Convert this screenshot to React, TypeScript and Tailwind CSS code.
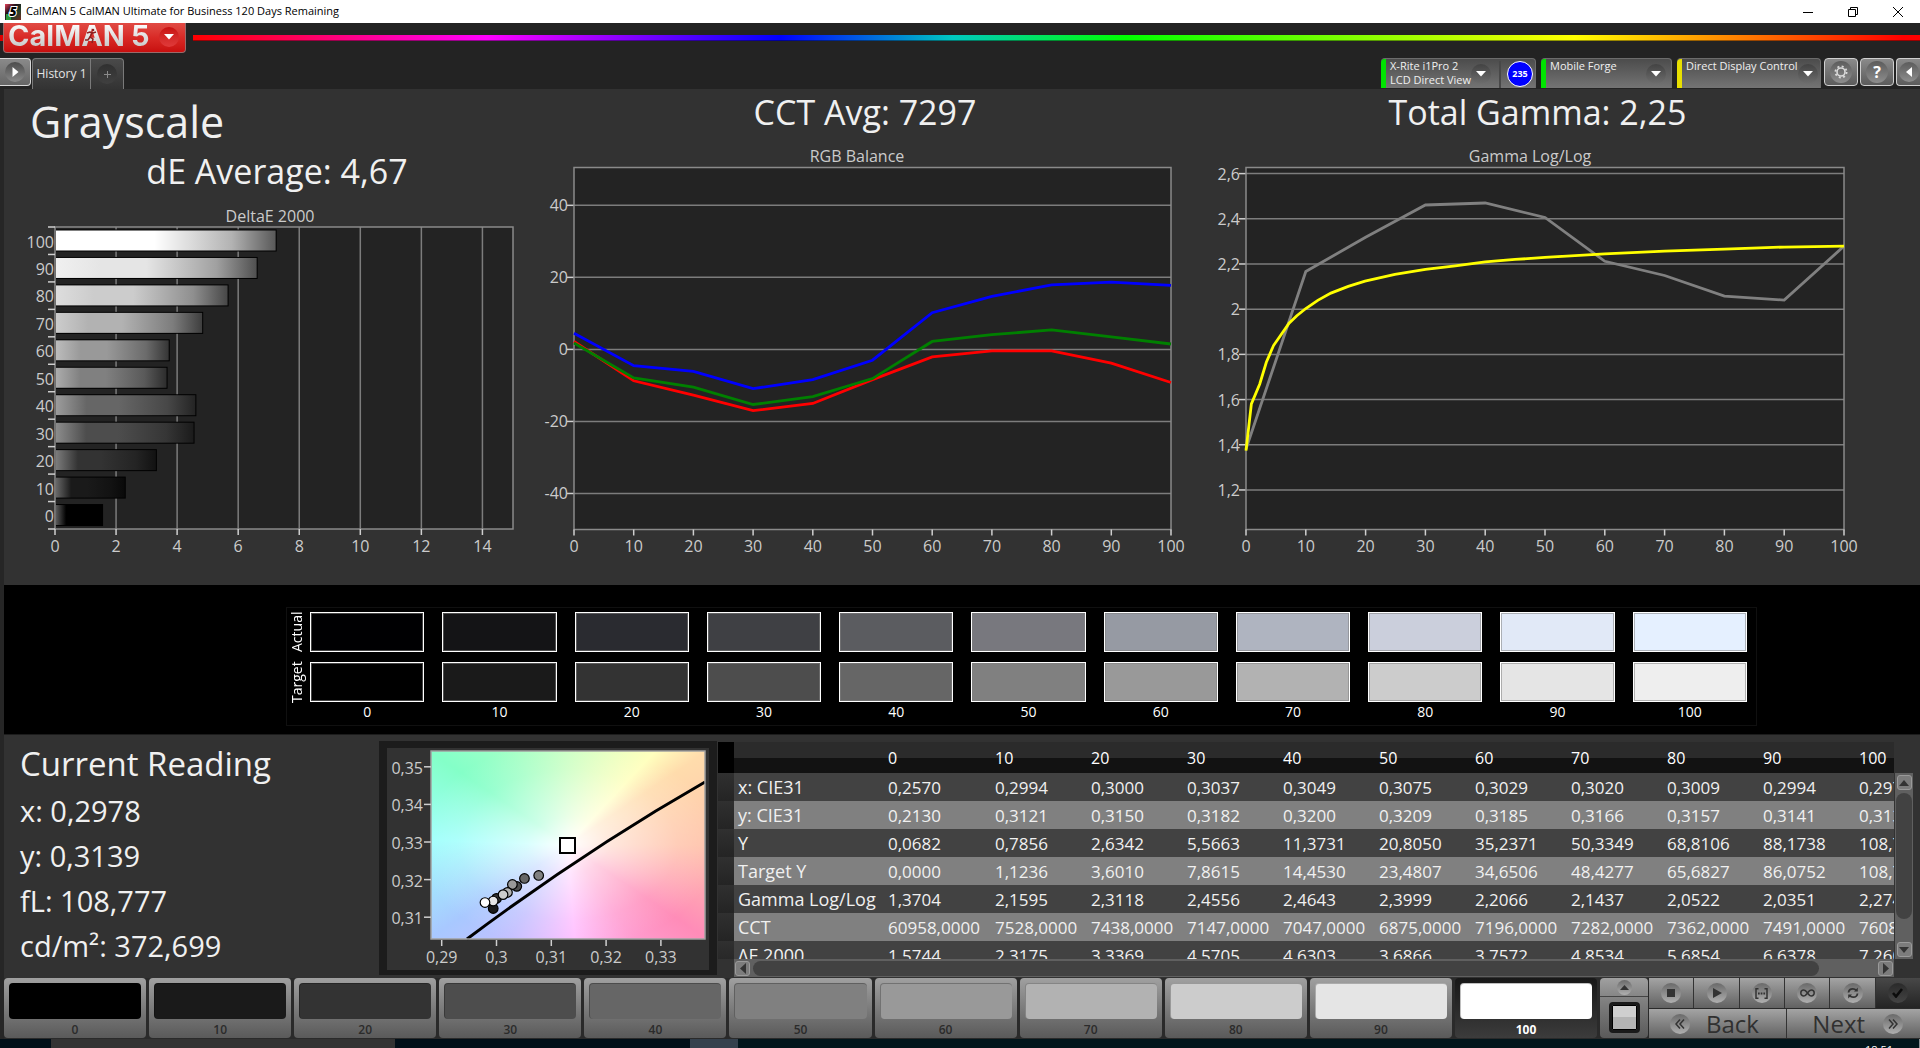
import React, { useState } from 'react';
import { clsx } from 'clsx';

const LEVELS = [0, 10, 20, 30, 40, 50, 60, 70, 80, 90, 100];

const TARGET_COLORS = ['#000000', '#1a1a1a', '#333333', '#4d4d4d', '#666666', '#808080', '#999999', '#b2b2b2', '#cccccc', '#e5e5e5', '#eeeeee'];
const ACTUAL_COLORS = ['#000002', '#141416', '#2a2b30', '#3f4044', '#5b5c60', '#78787e', '#969aa3', '#afb4c0', '#cbcfdc', '#e1e9f7', '#e5f0ff'];
const PATCH_COLORS = ['#000000', '#1a1a1a', '#333333', '#4d4d4d', '#666666', '#808080', '#999999', '#b2b2b2', '#cccccc', '#e5e5e5', '#ffffff'];

const DELTA_E = [1.5744, 2.3175, 3.3369, 4.5705, 4.6303, 3.6866, 3.7572, 4.8534, 5.6854, 6.6378, 7.26];
const BAR_HIGHLIGHTS = ['#5a5a5a', '#686868', '#7c7c7c', '#8c8c8c', '#9c9c9c', '#acacac', '#bcbcbc', '#cccccc', '#dddddd', '#f0f0f0', '#ffffff'];

const RGB_BALANCE = [
  { color: '#0000ff', values: [4.5, -4.5, -6.1, -10.9, -8.4, -3, 10.2, 14.7, 17.9, 18.7, 17.8] },
  { color: '#ff0000', values: [2.2, -8.7, -12.7, -17, -15, -8.4, -2.1, -0.4, -0.4, -3.8, -9.2] },
  { color: '#008000', values: [1.8, -7.9, -10.5, -15.3, -13.1, -8.1, 2.2, 4.1, 5.4, 3.5, 1.5] },
];

const GAMMA_MEASURED = [1.381, 2.167, 2.318, 2.461, 2.47, 2.406, 2.212, 2.149, 2.058, 2.04, 2.279];
const GAMMA_TARGET: [number, number][] = [
  [0, 1.374], [0.9, 1.581], [2.3, 1.669], [3.4, 1.765], [4.6, 1.839], [7.2, 1.938], [8.5, 1.971], [10, 2.003],
  [12, 2.039], [14.2, 2.071], [17.1, 2.101], [19.9, 2.124], [24.9, 2.154], [30, 2.176], [35, 2.192], [40, 2.209],
  [45, 2.22], [50, 2.229], [60, 2.245], [70, 2.257], [80, 2.266], [90, 2.275], [100, 2.279],
];

const TABLE_ROWS: { label: string; values: string[] }[] = [
  { label: 'x: CIE31', values: ['0,2570', '0,2994', '0,3000', '0,3037', '0,3049', '0,3075', '0,3029', '0,3020', '0,3009', '0,2994', '0,2978'] },
  { label: 'y: CIE31', values: ['0,2130', '0,3121', '0,3150', '0,3182', '0,3200', '0,3209', '0,3185', '0,3166', '0,3157', '0,3141', '0,3139'] },
  { label: 'Y', values: ['0,0682', '0,7856', '2,6342', '5,5663', '11,3731', '20,8050', '35,2371', '50,3349', '68,8106', '88,1738', '108,7770'] },
  { label: 'Target Y', values: ['0,0000', '1,1236', '3,6010', '7,8615', '14,4530', '23,4807', '34,6506', '48,4277', '65,6827', '86,0752', '108,7770'] },
  { label: 'Gamma Log/Log', values: ['1,3704', '2,1595', '2,3118', '2,4556', '2,4643', '2,3999', '2,2066', '2,1437', '2,0522', '2,0351', '2,2741'] },
  { label: 'CCT', values: ['60958,0000', '7528,0000', '7438,0000', '7147,0000', '7047,0000', '6875,0000', '7196,0000', '7282,0000', '7362,0000', '7491,0000', '7608,0000'] },
  { label: 'ΔE 2000', values: ['1,5744', '2,3175', '3,3369', '4,5705', '4,6303', '3,6866', '3,7572', '4,8534', '5,6854', '6,6378', '7,2600'] },
];

const READINGS = ['x: 0,2978', 'y: 0,3139', 'fL: 108,777', 'cd/m²: 372,699'];

const axisText = 'fill-[#cbcbcb] text-[16px]';
const roundIcon = 'flex items-center justify-center rounded-full bg-linear-to-b from-[#6a6a6a] to-[#b0b0b0]';

/* ---------- Header ---------- */

const TitleBar: React.FC = () => (
  <div className="flex h-[23px] flex-none items-center bg-white pl-[5px] text-black">
    <svg width="16" height="16" viewBox="0 0 16 16" aria-hidden="true">
      <defs>
        <linearGradient id="appIcon" x1="0" y1="0" x2="1" y2="1">
          <stop offset="0" stopColor="#e8405a" />
          <stop offset="0.35" stopColor="#201018" />
          <stop offset="0.65" stopColor="#20402a" />
          <stop offset="1" stopColor="#7a2a20" />
        </linearGradient>
      </defs>
      <rect width="16" height="16" fill="url(#appIcon)" />
      <rect x="1" y="10" width="5" height="6" fill="#2f9a3a" />
      <text x="8" y="12" textAnchor="middle" className="text-[12px] font-black italic" fill="#000" stroke="#fff" strokeWidth="2" paintOrder="stroke">5</text>
    </svg>
    <span className="ml-[5px] text-[11px]">CalMAN 5 CalMAN Ultimate for Business 120 Days Remaining</span>
    <div className="ml-auto flex h-full">
      <button aria-label="Minimize" className="flex w-[45px] items-center justify-center">
        <svg width="10" height="10" viewBox="0 0 10 10"><path d="M0 5.5h10" stroke="#000" /></svg>
      </button>
      <button aria-label="Restore" className="flex w-[45px] items-center justify-center">
        <svg width="10" height="10" viewBox="0 0 10 10" fill="none" stroke="#000"><path d="M0.5 2.5h7v7h-7zM2.5 2.5v-2h7v7h-2" /></svg>
      </button>
      <button aria-label="Close" className="flex w-[45px] items-center justify-center">
        <svg width="10" height="10" viewBox="0 0 10 10" stroke="#000"><path d="M0 0l10 10M10 0L0 10" /></svg>
      </button>
    </div>
  </div>
);

const logoText = 'bg-linear-to-b from-white to-[#c4c4c4] bg-clip-text font-[Inter] text-[29px] leading-[26px] font-bold text-transparent';

const BrandRow: React.FC = () => (
  <div className="flex h-[30px] flex-none items-start">
    <div className="mt-3 h-[6px] w-[3px] bg-[#e00000]" />
    <button className="flex h-[30px] w-[183px] items-start rounded-b border border-t-0 border-[#9a6a6a] bg-linear-to-b from-[#e04a44] via-[#d92a26] to-[#c80e0e] pl-1">
      <span className="relative">
        <span className={clsx(logoText, 'block')}>CalMAN</span>
        <svg className="absolute top-[5px] left-[76px]" width="14" height="16" viewBox="0 0 14 16" fill="none" stroke="#8c2020" strokeWidth="1.5" aria-hidden="true">
          <circle cx="9" cy="2" r="1.3" fill="#8c2020" stroke="none" />
          <path d="M3 5l3-1 3 1 3-1M8 5L6 9l3 2-1 4M6 9l-2 3H1" />
        </svg>
      </span>
      <span className={clsx(logoText, 'ml-[6px]')}>5</span>
      <span className="mt-1 mr-[6px] ml-auto flex h-5 w-5 items-center justify-center rounded-full bg-linear-to-b from-[#c81010] to-[#e03a3a]">
        <svg width="10" height="6" viewBox="0 0 10 6"><path d="M0 0h10L5 5.5z" fill="#fff" /></svg>
      </span>
    </button>
    <div className="mt-3 ml-[7px] h-[6px] flex-1 border-b border-black/40 bg-[linear-gradient(90deg,#ff0000_0%,#ff00ff_17%,#0000ff_34%,#00c8c0_44%,#00ff00_54%,#ffff00_80%,#ff0000_99%)]" />
  </div>
);

type DeviceProps = { lines: string[]; status: string; className: string; badge?: string };

const Device: React.FC<DeviceProps> = ({ lines, status, className, badge }) => (
  <div className={clsx('flex h-[30px] rounded-t border-t border-r border-[#6c6c6c] bg-linear-to-b from-[#4c4c4c] to-[#747474]', className)}>
    <div className={clsx('w-[5px] flex-none rounded-tl', status)} />
    <button aria-haspopup="listbox" className="flex min-w-0 flex-1 items-start justify-between pl-1 text-left text-[11px] leading-[14px] text-[#f0f0f0]">
      <span className="whitespace-nowrap">
        {lines.map(line => <span key={line} className="block">{line}</span>)}
      </span>
      <span className={clsx('mt-[5px] flex h-5 w-5 flex-none items-center justify-center rounded-full bg-linear-to-b from-[#434343] to-[#6e6e6e]', badge ? 'mr-[9px]' : 'mr-[5px]')}>
        <svg width="10" height="6" viewBox="0 0 10 6"><path d="M0 0h10L5 5.5z" fill="#fff" /></svg>
      </span>
    </button>
    {badge && (
      <div className="mt-[2px] flex w-[36px] flex-none items-start justify-center border-l-2 border-[#484848] pl-1">
        <span className="flex h-[26px] w-[26px] items-center justify-center rounded-full border border-white bg-[#0000ff] text-[9px] font-bold text-white">{badge}</span>
      </div>
    )}
  </div>
);

const toolButton = 'flex h-[28px] items-center justify-center rounded border border-[#d0d0d0] bg-linear-to-b from-[#8a8a8a] to-[#5c5c5c]';

const Toolbar: React.FC = () => (
  <div className="flex h-9 flex-none items-start overflow-hidden pt-[5px]">
    <button aria-label="Expand" className="flex h-[28px] w-[31px] items-center justify-center rounded-r border border-l-0 border-[#d8d8d8] bg-linear-to-b from-[#8a8a8a] to-[#666]">
      <span className="flex h-5 w-5 items-center justify-center rounded-full bg-linear-to-b from-[#4c4c4c] to-[#8a8a8a]">
        <svg width="7" height="10" viewBox="0 0 7 10"><path d="M0.5 0l6 5-6 5z" fill="#fff" /></svg>
      </span>
    </button>
    <div className="ml-px flex h-[31px] overflow-hidden rounded-t border border-b-0 border-[#7a7a7a] bg-linear-to-b from-[#4a4a4a] to-[#333]">
      <button className="w-[57px] text-[12px] text-[#e4e4e4]">History 1</button>
      <button aria-label="Add history" className="flex w-[33px] items-center justify-center border-l border-[#7a7a7a]">
        <span className="flex h-5 w-5 items-center justify-center rounded-full bg-linear-to-b from-[#303030] to-[#404040]">
          <svg width="7" height="7" viewBox="0 0 7 7"><path d="M3.5 0v7M0 3.5h7" stroke="#8a8a8a" /></svg>
        </span>
      </button>
    </div>
    <Device lines={['X-Rite i1Pro 2', 'LCD Direct View']} status="bg-[#00e400]" className="ml-auto w-[155px]" badge="235" />
    <Device lines={['Mobile Forge']} status="bg-[#00e400]" className="ml-[5px] w-[131px]" />
    <Device lines={['Direct Display Control']} status="bg-[#e8e000]" className="ml-[5px] w-[144px]" />
    <div className="ml-[3px] flex gap-[2px]">
      <button aria-label="Settings" className={clsx(toolButton, 'w-[34px]')}>
        <span className="flex h-[22px] w-[22px] items-center justify-center rounded-full bg-linear-to-b from-[#5c5c5c] to-[#8e8e8e]">
          <svg width="14" height="14" viewBox="0 0 14 14" fill="none" stroke="#dadada">
            <circle cx="7" cy="7" r="4" strokeWidth="1.6" />
            <circle cx="7" cy="7" r="5.6" strokeWidth="1.8" strokeDasharray="2 2.4" />
          </svg>
        </span>
      </button>
      <button aria-label="Help" className={clsx(toolButton, 'w-[34px]')}>
        <span className="flex h-[22px] w-[22px] items-center justify-center rounded-full bg-linear-to-b from-[#5c5c5c] to-[#8e8e8e] text-[16px] leading-none font-bold text-white">?</span>
      </button>
      <button aria-label="Collapse" className={clsx(toolButton, 'w-6 rounded-r-none border-r-0')}>
        <span className="flex h-5 w-5 items-center justify-center rounded-full bg-linear-to-b from-[#5c5c5c] to-[#8e8e8e]">
          <svg width="6" height="10" viewBox="0 0 6 10"><path d="M6 0v10L0 5z" fill="#fff" /></svg>
        </span>
      </button>
    </div>
  </div>
);

/* ---------- Charts ---------- */

const DeltaEChart: React.FC = () => {
  const left = 51;
  const top = 38;
  const height = 302;
  const unit = 30.53;
  const pitch = height / 11;
  return (
    <svg viewBox="0 0 536 390" className="block w-full" role="img" aria-label="DeltaE 2000">
      <defs>
        {DELTA_E.map((_, i) => (
          <linearGradient key={i} id={`bar${i}`}>
            <stop offset="0" stopColor={BAR_HIGHLIGHTS[i]} />
            <stop offset="0.22" stopColor={PATCH_COLORS[i]} />
            <stop offset="0.45" stopColor={PATCH_COLORS[i]} />
            <stop offset="0.8" stopColor={PATCH_COLORS[i]} stopOpacity="0.7" />
            <stop offset="1" stopColor={PATCH_COLORS[i]} stopOpacity="0.35" />
          </linearGradient>
        ))}
      </defs>
      <text x="266" y="33" textAnchor="middle" className={axisText}>DeltaE 2000</text>
      <rect x={left} y={top} width="458" height={height} fill="#232323" />
      {[2, 4, 6, 8, 10, 12, 14].map(v => (
        <line key={v} x1={left + v * unit} x2={left + v * unit} y1={top} y2={top + height} stroke="#7c7c7c" strokeWidth="1.5" />
      ))}
      <rect x={left} y={top} width="458" height={height} fill="none" stroke="#8a8a8a" strokeWidth="1.5" />
      {DELTA_E.map((v, i) => {
        const y = top + (10 - i) * pitch + 2.5;
        return (
          <g key={i}>
            <rect x={left + 1} y={y} width={v * unit - 1} height="22" fill="#000" />
            <rect x={left + 1} y={y + 1} width={v * unit - 2} height="20" fill={`url(#bar${i})`} />
            <text x="50" y={y + 18} textAnchor="end" className={axisText}>{LEVELS[i]}</text>
          </g>
        );
      })}
      {Array.from({ length: 12 }, (_, i) => (
        <line key={i} x1="44" x2={left} y1={top + i * pitch} y2={top + i * pitch} stroke="#cfcfcf" strokeWidth="1.5" />
      ))}
      {[0, 2, 4, 6, 8, 10, 12, 14].map(v => (
        <g key={v}>
          <line x1={left + v * unit} x2={left + v * unit} y1={top + height} y2={top + height + 6} stroke="#cfcfcf" strokeWidth="1.5" />
          <text x={left + v * unit} y="363" textAnchor="middle" className={axisText}>{v}</text>
        </g>
      ))}
    </svg>
  );
};

type Series = { color: string; points: [number, number][] };
type LineChartProps = {
  title: string;
  titleX: number;
  viewWidth: number;
  left: number;
  width: number;
  min: number;
  max: number;
  ticks: number[];
  series: Series[];
};

const LineChart: React.FC<LineChartProps> = ({ title, titleX, viewWidth, left, width, min, max, ticks, series }) => {
  const top = 30.5;
  const height = 362;
  const sx = (v: number) => left + (v / 100) * width;
  const sy = (v: number) => top + ((max - v) / (max - min)) * height;
  return (
    <svg viewBox={`0 0 ${viewWidth} 440`} className="block w-full" role="img" aria-label={title}>
      <text x={titleX} y="25" textAnchor="middle" className={axisText}>{title}</text>
      <rect x={left} y={top} width={width} height={height} fill="#232323" />
      {ticks.map(t => (
        <g key={t}>
          <line x1={left} x2={left + width} y1={sy(t)} y2={sy(t)} stroke="#7c7c7c" strokeWidth="1.5" />
          <line x1={left - 7} x2={left} y1={sy(t)} y2={sy(t)} stroke="#cfcfcf" strokeWidth="1.5" />
          <text x={left - 6} y={sy(t) + 6} textAnchor="end" className={axisText}>{String(t).replace('.', ',')}</text>
        </g>
      ))}
      <rect x={left} y={top} width={width} height={height} fill="none" stroke="#8a8a8a" strokeWidth="1.5" />
      {LEVELS.map(v => (
        <g key={v}>
          <line x1={sx(v)} x2={sx(v)} y1={top + height} y2={top + height + 6} stroke="#cfcfcf" strokeWidth="1.5" />
          <text x={sx(v)} y="415" textAnchor="middle" className={axisText}>{v}</text>
        </g>
      ))}
      {series.map(s => (
        <polyline key={s.color} fill="none" stroke={s.color} strokeWidth="2.8" points={s.points.map(([x, y]) => `${sx(x)},${sy(y)}`).join(' ')} />
      ))}
    </svg>
  );
};

const withLevels = (values: number[]) => values.map((v, i): [number, number] => [i * 10, v]);

const heading = 'text-center text-[34px] leading-[34px] text-[#f0f0f0]';

const ChartsPanel: React.FC = () => (
  <section className="grid flex-1 grid-cols-[536fr_650fr_730fr] items-start overflow-hidden bg-[#323232]">
    <div>
      <h1 className="h-[65px] pl-[26px] text-[43px] leading-[65px] text-[#f0f0f0]">Grayscale</h1>
      <p className={clsx(heading, 'pb-px pl-[10px]')}>dE Average: 4,67</p>
      <DeltaEChart />
    </div>
    <div>
      <p className={clsx(heading, 'pt-[6px] pb-2')}>CCT Avg: 7297</p>
      <LineChart
        title="RGB Balance"
        titleX={317}
        viewWidth={650}
        left={34}
        width={597}
        min={-50}
        max={50.5}
        ticks={[40, 20, 0, -20, -40]}
        series={RGB_BALANCE.map(s => ({ color: s.color, points: withLevels(s.values) }))}
      />
    </div>
    <div>
      <p className={clsx(heading, 'pt-[6px] pr-[35px] pb-2')}>Total Gamma: 2,25</p>
      <LineChart
        title="Gamma Log/Log"
        titleX={340}
        viewWidth={730}
        left={56}
        width={598}
        min={1.025}
        max={2.627}
        ticks={[2.6, 2.4, 2.2, 2, 1.8, 1.6, 1.4, 1.2]}
        series={[
          { color: '#808080', points: withLevels(GAMMA_MEASURED) },
          { color: '#ffff00', points: GAMMA_TARGET },
        ]}
      />
    </div>
  </section>
);

/* ---------- Actual / target swatches ---------- */

const Swatch: React.FC<{ color: string }> = ({ color }) => (
  <div className="h-10 border border-white shadow-[inset_0_0_0_1px_rgba(128,128,128,0.55)]" style={{ backgroundColor: color }} />
);

const SwatchStrip: React.FC = () => (
  <section className="h-[149px] flex-none bg-black pt-[22px] pr-[163px] pl-[282px]">
    <div className="flex h-[119px] border border-[#101010] pt-1 pr-[9px]">
      <div className="mr-[5px] flex w-[18px] flex-none flex-col gap-[10px] text-[14px] font-medium text-white">
        <span className="flex h-10 rotate-180 items-center justify-center [writing-mode:vertical-rl]">Actual</span>
        <span className="flex h-10 rotate-180 items-center justify-center [writing-mode:vertical-rl]">Target</span>
      </div>
      <div className="grid flex-1 grid-cols-11 gap-x-[18px]">
        {LEVELS.map((level, i) => (
          <div key={level} className="flex flex-col">
            <Swatch color={ACTUAL_COLORS[i]} />
            <div className="h-[10px]" />
            <Swatch color={TARGET_COLORS[i]} />
            <span className="text-center text-[14px] leading-5 font-medium text-white">{level}</span>
          </div>
        ))}
      </div>
    </div>
  </section>
);

/* ---------- Current reading ---------- */

const CIE_POINTS = [
  { x: 0.2994, y: 0.3123, color: '#1a1a1a' },
  { x: 0.3, y: 0.315, color: '#333333' },
  { x: 0.3037, y: 0.3182, color: '#4d4d4d' },
  { x: 0.3051, y: 0.3203, color: '#666666' },
  { x: 0.3077, y: 0.3211, color: '#808080' },
  { x: 0.3029, y: 0.3187, color: '#999999' },
  { x: 0.302, y: 0.3166, color: '#b2b2b2' },
  { x: 0.3012, y: 0.316, color: '#cccccc' },
  { x: 0.2994, y: 0.3143, color: '#e5e5e5' },
  { x: 0.2979, y: 0.3139, color: '#ffffff' },
];

const CieChart: React.FC = () => {
  const sx = (x: number) => 109.5 + (x - 0.3) * 5480;
  const sy = (y: number) => 94 - (y - 0.33) * 3760;
  return (
    <svg viewBox="0 0 322 222" className="block w-full" role="img" aria-label="CIE 1931 chromaticity">
      <foreignObject x="44" y="3" width="274" height="188">
        <div className="h-full bg-[radial-gradient(farthest-side,#ffffff_0%,rgba(255,255,255,0.6)_30%,rgba(255,255,255,0.15)_80%,rgba(255,255,255,0)_110%),conic-gradient(#ccffc4_0deg,#ffffbe_43deg,#ffdcac_56deg,#ffc4ac_90deg,#ff8cb8_124deg,#ff9cd0_145deg,#ffc0ff_176deg,#c4c0ff_212deg,#a8c8ff_236deg,#a0fffc_272deg,#84ffc8_304deg,#ccffc4_360deg)]" />
      </foreignObject>
      <path d="M80 191Q199 102 318 34" fill="none" stroke="#000" strokeWidth="3" />
      <rect x="44" y="3" width="274" height="188" fill="none" stroke="#a0a0a0" strokeWidth="1.5" />
      {CIE_POINTS.map(p => (
        <circle key={p.color} cx={sx(p.x)} cy={sy(p.y)} r="4.8" fill={p.color} stroke="#000" strokeWidth="1.2" />
      ))}
      <rect x="173" y="90" width="15" height="15" fill="#fff" stroke="#000" strokeWidth="2" />
      {[0.35, 0.34, 0.33, 0.32, 0.31].map(v => (
        <g key={v}>
          <line x1="37" x2="44" y1={sy(v)} y2={sy(v)} stroke="#cfcfcf" strokeWidth="1.5" />
          <text x="36" y={sy(v) + 7} textAnchor="end" className={axisText}>{String(v).replace('.', ',')}</text>
        </g>
      ))}
      {[0.29, 0.3, 0.31, 0.32, 0.33].map(v => (
        <g key={v}>
          <line x1={sx(v)} x2={sx(v)} y1="192" y2="198" stroke="#cfcfcf" strokeWidth="1.5" />
          <text x={sx(v)} y="215" textAnchor="middle" className={axisText}>{String(v).replace('.', ',')}</text>
        </g>
      ))}
    </svg>
  );
};

/* ---------- Data table ---------- */

const scrollButton = 'flex h-[15px] w-[15px] flex-none items-center justify-center rounded-[3px] border border-[#9a9a9a] bg-[#7c7c7c]';

const DataTable: React.FC = () => (
  <div className="mt-[7px] flex min-w-0 flex-1">
    <div className="min-w-0 flex-1">
      <div className="h-[217px] overflow-hidden">
        <table className="w-[1233px] table-fixed border-collapse text-left text-[17px] text-[#f0f0f0]">
          <colgroup>
            <col className="w-4" />
            <col className="w-[150px]" />
            <col className="w-[107px]" />
            {LEVELS.slice(1).map(l => <col key={l} className="w-24" />)}
          </colgroup>
          <thead>
            <tr className="h-[31px] bg-linear-to-b from-[#2b2b2b] from-50% to-[#121212] to-50%">
              <td className="bg-black" />
              <td />
              {LEVELS.map(l => <th key={l} scope="col" className="p-0 pt-[2px] pl-1 text-[16px] leading-[29px] font-medium text-white">{l}</th>)}
            </tr>
          </thead>
          <tbody>
            {TABLE_ROWS.map((row, i) => (
              <tr key={row.label} className={clsx('h-7', i % 2 ? 'bg-[#808080]' : 'bg-[#424242]')}>
                <td className="bg-linear-to-b from-[#303030] to-[#242424]" />
                <th scope="row" className="p-0 pt-px pl-1 text-[18px] leading-[27px] font-normal whitespace-nowrap">{row.label}</th>
                {row.values.map((v, j) => <td key={j} className="p-0 pt-px pl-1 leading-[27px] whitespace-nowrap">{v}</td>)}
              </tr>
            ))}
          </tbody>
        </table>
      </div>
      <div className="ml-4 flex h-[18px] items-center gap-[3px] bg-[#606060] px-px">
        <button aria-label="Scroll left" className={scrollButton}>
          <svg width="6" height="11" viewBox="0 0 6 11"><path d="M6 0v11L0 5.500z" fill="#333" /></svg>
        </button>
        <div className="flex-1">
          <div className="h-[15px] w-[95%] rounded-full bg-[#424242]" />
        </div>
        <button aria-label="Scroll right" className={scrollButton}>
          <svg width="6" height="11" viewBox="0 0 6 11"><path d="M0 0v11l6-5.500z" fill="#333" /></svg>
        </button>
      </div>
    </div>
    <div className="mt-[31px] mr-[7px] ml-px flex h-[186px] w-[18px] flex-none flex-col items-center gap-[3px] bg-[#606060] py-[2px]">
      <button aria-label="Scroll up" className={scrollButton}>
        <svg width="10" height="6" viewBox="0 0 10 6"><path d="M0 6h10L5 0z" fill="#333" /></svg>
      </button>
      <div className="w-full flex-1 px-px">
        <div className="h-[86%] rounded-full bg-[#424242]" />
      </div>
      <button aria-label="Scroll down" className={scrollButton}>
        <svg width="10" height="6" viewBox="0 0 10 6"><path d="M0 0h10L5 6z" fill="#333" /></svg>
      </button>
    </div>
  </div>
);

const ReadingPanel: React.FC = () => (
  <section className="flex h-[244px] flex-none border-t border-[#1c1c1c] bg-[#323232]">
    <div className="w-[375px] flex-none pl-4 text-[#f0f0f0]">
      <h2 className="mt-[7px] text-[33px] leading-[44px]">Current Reading</h2>
      <div className="mt-[2px] text-[29px] leading-[45px]">
        {READINGS.map(r => <p key={r}>{r}</p>)}
      </div>
    </div>
    <div className="mt-[6px] mr-px h-[234px] w-[338px] flex-none border-[8px] border-t-[7px] border-b-[5px] border-[#1c1c1c]">
      <CieChart />
    </div>
    <DataTable />
  </section>
);

/* ---------- Bottom bar ---------- */

const transportButton = 'flex flex-1 items-center justify-center border-r border-[#333] bg-linear-to-b from-[#a4a4a4] to-[#626262] last:border-r-0';
const ICON = '#333';

const BottomBar: React.FC = () => {
  const [selected, setSelected] = useState(100);
  return (
    <div className="flex h-[61px] flex-none gap-[3px] bg-[#2a2a2a] pb-px">
      {LEVELS.map((level, i) => {
        const active = selected === level;
        return (
          <button
            key={level}
            onClick={() => setSelected(level)}
            className={clsx(
              'flex min-w-0 flex-1 flex-col rounded px-[5px] pt-[5px] text-[12px]',
              active ? 'bg-linear-to-b from-[#181818] to-[#3c3c3c] font-bold text-white' : 'bg-linear-to-b from-[#a0a0a0] to-[#5a5a5a] font-semibold text-[#2b2b2b]',
            )}
          >
            <span className="h-9 w-full rounded border-t border-l border-black/25" style={{ backgroundColor: PATCH_COLORS[i] }} />
            <span className="w-full pt-[3px] text-center leading-[16px]">{level}</span>
          </button>
        );
      })}
      <div className="flex w-[48px] flex-none flex-col overflow-hidden rounded">
        <button aria-label="Show more" className="flex h-[19px] items-center justify-center border-b border-[#444] bg-linear-to-b from-[#a0a0a0] to-[#868686]">
          <span className={clsx(roundIcon, 'h-[15px] w-[15px]')}>
            <svg width="9" height="5" viewBox="0 0 9 5"><path d="M0 5h9L4.500 0z" fill={ICON} /></svg>
          </span>
        </button>
        <button aria-label="Pattern window" className="flex flex-1 items-center justify-center bg-linear-to-b from-[#848484] to-[#5a5a5a]">
          <span className="h-[31px] w-[31px] rounded border-[3px] border-[#1a1a1a] bg-linear-to-b from-[#cfcfcf] from-50% to-[#b4b4b4] to-50% shadow-[inset_0_0_0_1px_#000]" />
        </button>
      </div>
      <div className="-ml-[2px] flex w-[271px] flex-none flex-col gap-px">
        <div className="flex h-[30px]">
          <button aria-label="Stop" className={transportButton}>
            <span className={clsx(roundIcon, 'h-5 w-5')}><svg width="8" height="8"><rect width="8" height="8" fill={ICON} /></svg></span>
          </button>
          <button aria-label="Play" className={transportButton}>
            <span className={clsx(roundIcon, 'h-5 w-5 pl-[2px]')}><svg width="9" height="10" viewBox="0 0 9 10"><path d="M0 0l9 5-9 5z" fill={ICON} /></svg></span>
          </button>
          <button aria-label="Read series" className={transportButton}>
            <span className={clsx(roundIcon, 'h-5 w-5')}>
              <svg width="13" height="11" viewBox="0 0 13 11" fill="none" stroke={ICON} strokeWidth="1.5">
                <path d="M3.500 0.800H1v9.400h2.500M9.500 0.800H12v9.400H9.500" />
                <path d="M3 5.500h1.700M5.700 5.500h1.700M8.400 5.500h1.700" strokeWidth="2" />
              </svg>
            </span>
          </button>
          <button aria-label="Continuous" className={transportButton}>
            <span className={clsx(roundIcon, 'h-5 w-5')}>
              <svg width="15" height="8" viewBox="0 0 15 8" fill="none" stroke={ICON} strokeWidth="1.5">
                <path d="M7.500 4C6 1.800 5 1 3.800 1a3 3 0 0 0 0 6C5 7 6 6.200 7.500 4s2.500-3 3.700-3a3 3 0 0 1 0 6C10 7 9 6.200 7.500 4z" />
              </svg>
            </span>
          </button>
          <button aria-label="Refresh" className={transportButton}>
            <span className={clsx(roundIcon, 'h-5 w-5')}>
              <svg width="12" height="12" viewBox="0 0 12 12" fill="none" stroke={ICON} strokeWidth="1.800">
                <path d="M1.500 5.500C1.800 3 3.500 1.800 5.800 1.800c1.500 0 2.600.5 3.600 1.700M10.500 6.500c-.3 2.500-2 3.700-4.300 3.700-1.500 0-2.600-.5-3.600-1.700" />
                <path d="M10.800 0.500v4H7zM1.200 11.500v-4H5z" fill={ICON} stroke="none" />
              </svg>
            </span>
          </button>
          <button aria-label="Accept" className="flex flex-1 items-center justify-center bg-linear-to-b from-[#484848] to-[#242424]">
            <span className="flex h-5 w-5 items-center justify-center rounded-full bg-linear-to-b from-[#2a2a2a] to-[#444]">
              <svg width="11" height="10" viewBox="0 0 11 10"><path d="M1 5l3 3.500L10 1" fill="none" stroke="#0c0c0c" strokeWidth="2.600" /></svg>
            </span>
          </button>
        </div>
        <div className="flex flex-1 text-[24px] leading-none font-medium text-[#303030]">
          <button className="flex flex-1 items-center gap-4 border-r border-[#333] bg-linear-to-b from-[#a4a4a4] to-[#626262] pl-[21px]">
            <span className={clsx(roundIcon, 'h-5 w-5')}>
              <svg width="10" height="10" viewBox="0 0 10 10" fill="none" stroke={ICON} strokeWidth="1.500"><path d="M5 0.500L1 5l4 4.500M9 0.500L5 5l4 4.500" /></svg>
            </span>
            Back
          </button>
          <button className="flex flex-1 items-center justify-end gap-[18px] bg-linear-to-b from-[#a4a4a4] to-[#626262] pr-[17px]">
            Next
            <span className={clsx(roundIcon, 'h-5 w-5')}>
              <svg width="10" height="10" viewBox="0 0 10 10" fill="none" stroke={ICON} strokeWidth="1.500"><path d="M1 0.500L5 5 1 9.500M5 0.500L9 5 5 9.500" /></svg>
            </span>
          </button>
        </div>
      </div>
    </div>
  );
};

const Taskbar: React.FC = () => (
  <div className="flex h-[9px] flex-none overflow-hidden bg-[#02161c]">
    <div className="w-[51px] bg-[#010f18]" />
    <div className="w-[344px] bg-[#333]" />
    <div className="w-[295px] bg-[#010f18]" />
    <div className="w-[48px] bg-[#35414d]" />
    <span className="mt-[3px] mr-[26px] ml-auto text-[11px] leading-4 text-white">18:51</span>
    <div className="w-px bg-[#8a9094]" />
  </div>
);

const App: React.FC = () => (
  <div className="flex h-screen flex-col overflow-hidden bg-[#232323] font-['Open_Sans','Noto_Sans',sans-serif]">
    <TitleBar />
    <BrandRow />
    <Toolbar />
    <div className="flex min-h-0 flex-1 flex-col border-l-4 border-[#262626]">
      <ChartsPanel />
      <SwatchStrip />
      <ReadingPanel />
      <BottomBar />
    </div>
    <Taskbar />
  </div>
);

export default App;
